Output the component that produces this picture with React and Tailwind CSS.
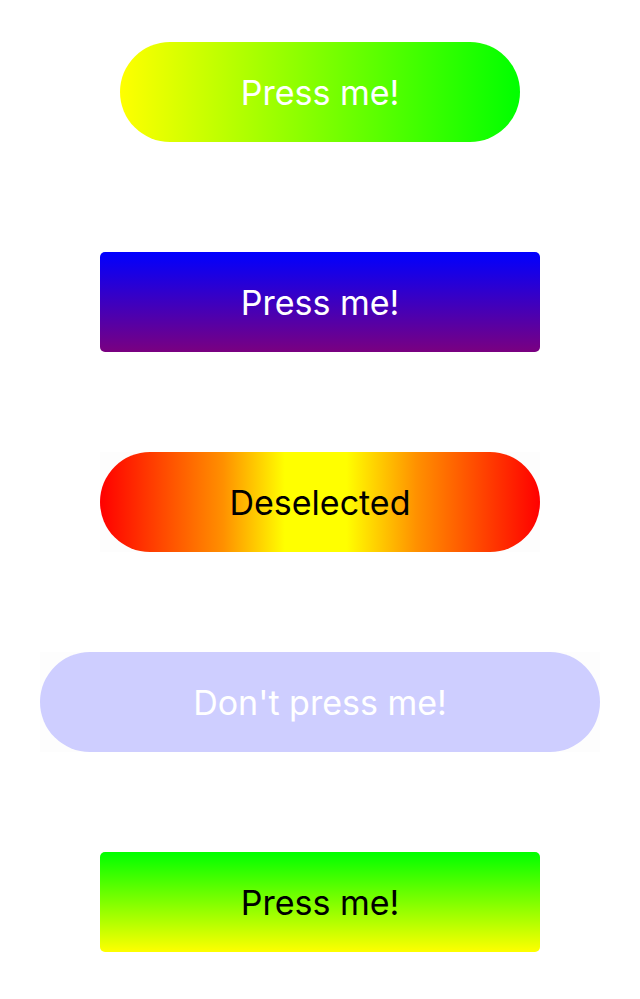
export default function App() {
  const font = { fontFamily: "Inter, 'Noto Sans', sans-serif" };
  return (
    <div className="min-h-[999px] w-[640px] bg-white flex flex-col items-center pt-[42px] gap-[100px]" style={font}>
      <button className="w-[400px] h-[100px] mb-[10px] rounded-full bg-[linear-gradient(to_right,#ffff00,#00ff00)] text-white text-[34px] flex items-center justify-center">
        Press me!
      </button>
      <button className="w-[440px] h-[100px] rounded-[5px] bg-[linear-gradient(to_bottom,#0000ff,#7a0080)] text-white text-[34px] flex items-center justify-center">
        Press me!
      </button>
      <div className="w-[440px] h-[100px] bg-[#fdfdfd]">
        <button className="w-full h-full rounded-full bg-[linear-gradient(to_right,#ff0000_0%,#ff9000_28%,#ffff00_42%,#ffff00_56%,#ff9000_72%,#ff0000_100%)] text-black text-[34px] flex items-center justify-center">
          Deselected
        </button>
      </div>
      <div className="w-[560px] h-[100px] bg-[#fdfdfd]">
        <button className="w-full h-full rounded-full bg-[#ceceff] text-white text-[34px] flex items-center justify-center">
          Don't press me!
        </button>
      </div>
      <button className="w-[440px] h-[100px] rounded-[5px] bg-[linear-gradient(to_bottom,#00ff00,#ffff00)] text-black text-[34px] flex items-center justify-center">
        Press me!
      </button>
    </div>
  );
}
